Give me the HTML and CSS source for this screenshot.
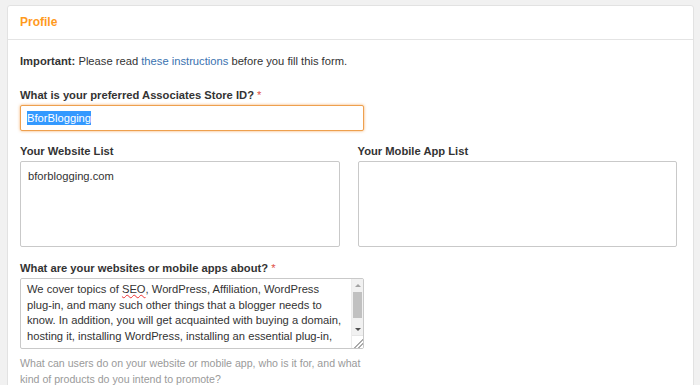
FILE: index.html
```html
<!DOCTYPE html>
<html lang="en">
<head>
    <meta charset="UTF-8">
    <meta name="viewport" content="width=device-width, initial-scale=1.0">
    <title>Profile</title>
    <link rel="stylesheet" href="styles.css">
</head>
<body>
    <div class="panel">
        <div class="panel-heading">Profile</div>
        <div class="panel-body">
            <p class="notice"><b>Important:</b> Please read <a href="#">these instructions</a> before you fill this form.</p>

            <div class="form-group">
                <label>What is your preferred Associates Store ID? <span class="req">*</span></label>
                <div class="field field-focus"><span class="selected">BforBlogging</span></div>
            </div>

            <div class="form-row">
                <div class="col">
                    <label>Your Website List</label>
                    <div class="field area">bforblogging.com</div>
                </div>
                <div class="col">
                    <label>Your Mobile App List</label>
                    <div class="field area"></div>
                </div>
            </div>

            <div class="form-group">
                <label>What are your websites or mobile apps about? <span class="req">*</span></label>
                <div class="field area-box">
                    <div class="area-text">
                        <span class="line">We cover topics of <span class="typo">SEO</span>, WordPress, Affiliation, WordPress</span>
                        <span class="line">plug-in, and many such other things that a blogger needs to</span>
                        <span class="line">know. In addition, you will get acquainted with buying a domain,</span>
                        <span class="line">hosting it, installing WordPress, installing an essential plug-in,</span>
                    </div>
                    <div class="scrollbar">
                        <div class="sb-btn"><i class="arrow-up"></i></div>
                        <div class="sb-track"><div class="sb-thumb"></div></div>
                        <div class="sb-btn"><i class="arrow-down"></i></div>
                        <div class="sb-corner"></div>
                    </div>
                </div>
                <p class="help">What can users do on your website or mobile app, who is it for, and what<br>kind of products do you intend to promote?</p>
            </div>
        </div>
    </div>
</body>
</html>
```

FILE: styles.css
```css
body {
    font-family: Arial, "Liberation Sans", sans-serif;
    font-size: 11.2px;
    line-height: 16px;
    color: #333;
    background-color: #f1f1f1;
    margin: 0;
    overflow: hidden;
}

.panel {
    margin: 5px 0 0 7px;
    width: 685px;
    height: 420px;
    background-color: #fff;
    border: 1px solid #e2e2e2;
    border-radius: 3px;
}

.panel-heading {
    height: 33px;
    line-height: 33px;
    padding-left: 12px;
    border-bottom: 1px solid #e4e4e4;
    color: #ff9a1e;
    font-weight: bold;
    font-size: 12px;
}

.panel-body {
    padding: 13px 16px 0 12px;
}

.notice {
    margin: 0 0 18px;
}

.notice b {
    color: #333;
}

a {
    color: #3a72b0;
    text-decoration: none;
}

label {
    display: block;
    font-weight: bold;
    margin-bottom: 2px;
}

.req {
    color: #e0524a;
    font-weight: normal;
}

.form-group {
    margin-bottom: 12px;
}

.field {
    box-sizing: border-box;
    border: 1px solid #c9c9c9;
    border-radius: 2px;
    background: #fff;
}

.field-focus {
    width: 344px;
    height: 26px;
    padding: 4px 6px;
    border-color: #eea04e;
    box-shadow: 0 0 3px rgba(240, 150, 60, 0.8);
}

.selected {
    background-color: #3399ff;
    color: #fff;
    padding: 1px 0;
}

.form-row {
    display: grid;
    grid-template-columns: 1fr 1fr;
    column-gap: 18px;
    margin-bottom: 13px;
}

.area {
    height: 86px;
    padding: 6px 7px;
}

.area-box {
    display: flex;
    width: 344px;
    height: 71px;
    overflow: hidden;
}

.area-text {
    flex: 1;
    padding: 3px 0 0 6px;
    line-height: 15.7px;
    overflow: hidden;
}

.line {
    display: block;
    white-space: nowrap;
}

.typo {
    text-decoration: underline wavy #e33;
    text-decoration-thickness: 1px;
}

.scrollbar {
    width: 11px;
    display: flex;
    flex-direction: column;
    background: #f1f1f1;
    border-left: 1px solid #ececec;
}

.sb-btn {
    height: 12px;
    display: flex;
    align-items: center;
    justify-content: center;
}

.arrow-up {
    border-left: 3px solid transparent;
    border-right: 3px solid transparent;
    border-bottom: 3px solid #a3a3a3;
}

.arrow-down {
    border-left: 3px solid transparent;
    border-right: 3px solid transparent;
    border-top: 3px solid #505050;
}

.sb-track {
    flex: 1;
    padding: 1px 1px 0;
}

.sb-thumb {
    height: 26px;
    background: #c1c1c1;
}

.sb-corner {
    height: 12px;
    background: #fff;
    border-top: 1px solid #e6e6e6;
    background-image: linear-gradient(135deg, transparent 60%, #aaa 60%, #aaa 66%, transparent 66%, transparent 78%, #aaa 78%, #aaa 84%, transparent 84%);
}

.help {
    margin: 7px 0 0;
    color: #9a9a9a;
    font-size: 10.6px;
    line-height: 15.5px;
}
```
